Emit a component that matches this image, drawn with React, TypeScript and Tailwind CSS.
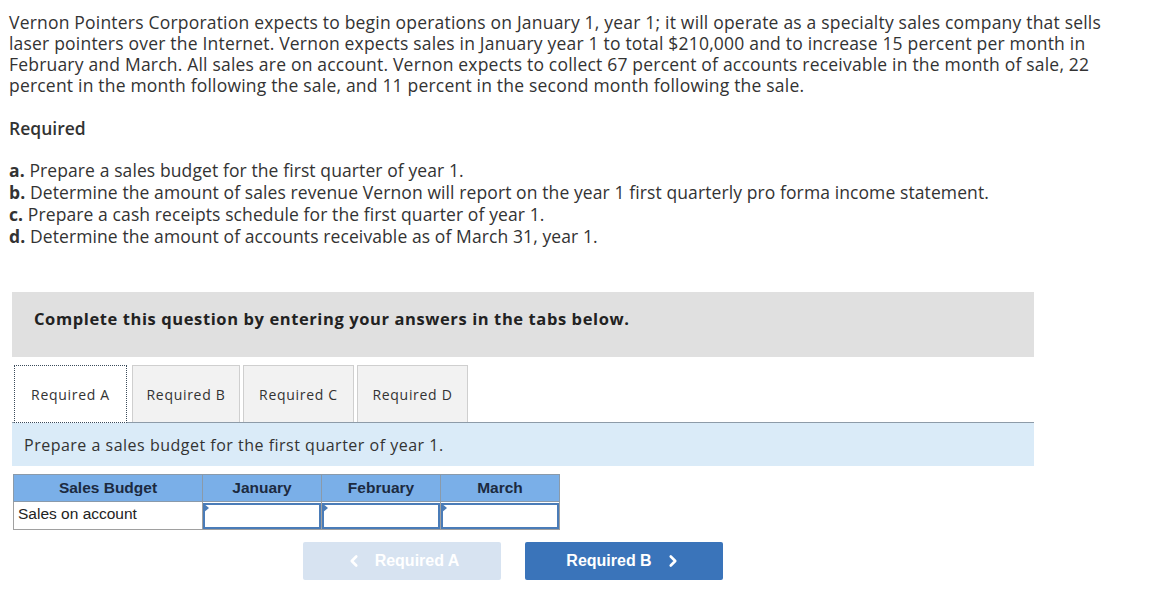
import { ChevronLeft, ChevronRight } from "lucide-react";

const tabs = ["Required A", "Required B", "Required C", "Required D"];
const months = ["January", "February", "March"];

function InputCell() {
  return (
    <td className="border border-[#a0a0a0] p-0">
      <div className="relative h-[26px] border-2 border-[#4a7cb8] bg-white">
        <span className="absolute left-[-2px] top-[-2px] h-0 w-0 border-y-[5px] border-l-[6px] border-y-transparent border-l-[#4a7cb8]" />
      </div>
    </td>
  );
}

export default function App() {
  return (
    <div className="min-h-[592px] w-[1162px] bg-white text-[#333]">
      {/* Problem text */}
      <div className="pl-[9px] pt-[12px] font-['Open_Sans',sans-serif] text-[17.5px] leading-[21px] tracking-[0.2px]">
        Vernon Pointers Corporation expects to begin operations on January 1, year 1; it will operate as a specialty sales company that sells
        <br />
        laser pointers over the Internet. Vernon expects sales in January year 1 to total $210,000 and to increase 15 percent per month in
        <br />
        February and March. All sales are on account. Vernon expects to collect 67 percent of accounts receivable in the month of sale, 22
        <br />
        percent in the month following the sale, and 11 percent in the second month following the sale.
      </div>

      <div className="pl-[9px] pt-[22px] font-['Open_Sans',sans-serif] text-[17.5px] font-semibold leading-[21px]">
        Required
      </div>

      <div className="pl-[9px] pt-[20px] font-['Open_Sans',sans-serif] text-[17.5px] leading-[22px] tracking-[0.1px]">
        <div>
          <b>a.</b> Prepare a sales budget for the first quarter of year 1.
        </div>
        <div>
          <b>b.</b> Determine the amount of sales revenue Vernon will report on the year 1 first quarterly pro forma income statement.
        </div>
        <div>
          <b>c.</b> Prepare a cash receipts schedule for the first quarter of year 1.
        </div>
        <div>
          <b>d.</b> Determine the amount of accounts receivable as of March 31, year 1.
        </div>
      </div>

      {/* Question panel */}
      <div className="ml-[12px] mt-[45px] w-[1022px]">
        <div className="flex h-[65px] items-center bg-[#e0e0e0] pb-[10px] pl-[22px] font-['Open_Sans',sans-serif] text-[16.5px] font-bold tracking-[0.6px] text-[#222]">
          Complete this question by entering your answers in the tabs below.
        </div>

        <div className="mt-[8px] flex border-b border-[#8d9ba8] pl-[2px] font-['Open_Sans',sans-serif] text-[14px] tracking-[0.7px] text-[#333]">
          <div className="mb-[-1px] flex h-[58px] w-[113px] items-center justify-center border border-dotted border-[#3a4a5a] bg-white">
            {tabs[0]}
          </div>
          <div className="ml-[5px] flex h-[57px] w-[108px] items-center justify-center border border-b-0 border-[#cfcfcf] bg-[#f2f2f2]">
            {tabs[1]}
          </div>
          <div className="ml-[3px] flex h-[57px] w-[111px] items-center justify-center border border-b-0 border-[#cfcfcf] bg-[#f2f2f2]">
            {tabs[2]}
          </div>
          <div className="ml-[3px] flex h-[57px] w-[111px] items-center justify-center border border-b-0 border-[#cfcfcf] bg-[#f2f2f2]">
            {tabs[3]}
          </div>
        </div>

        <div className="flex h-[43px] items-center bg-[#daebf8] pl-[12px] font-['Open_Sans',sans-serif] text-[16px] tracking-[0.5px] text-[#333]">
          Prepare a sales budget for the first quarter of year 1.
        </div>

        {/* Sales budget table */}
        <table className="ml-[1px] mt-[8px] border-collapse font-['Liberation_Sans',Arial,sans-serif] text-[15.5px]">
          <thead>
            <tr className="h-[27px] bg-[#7aafe8] text-[#1c2a40]">
              <th className="w-[189px] border border-[#8a9aaa] pb-[1px] font-bold">Sales Budget</th>
              {months.map((m) => (
                <th key={m} className="w-[119px] border border-[#8a9aaa] pb-[1px] font-bold">
                  {m}
                </th>
              ))}
            </tr>
          </thead>
          <tbody>
            <tr className="h-[28px]">
              <td className="border border-[#a0a0a0] pb-[3px] pl-[4px] text-[#222]">Sales on account</td>
              <InputCell />
              <InputCell />
              <InputCell />
            </tr>
          </tbody>
        </table>

        {/* Navigation */}
        <div className="mt-[12px] flex gap-[24px] pl-[291px] font-['Liberation_Sans',Arial,sans-serif] text-[16px] font-bold">
          <button className="flex h-[38px] w-[198px] items-center justify-center gap-[12px] rounded-[2px] bg-[#d7e3f1] text-white">
            <ChevronLeft size={18} strokeWidth={3.5} />
            Required A
          </button>
          <button className="flex h-[38px] w-[198px] items-center justify-center gap-[12px] rounded-[2px] bg-[#3a74ba] text-white">
            Required B
            <ChevronRight size={18} strokeWidth={3.5} />
          </button>
        </div>
      </div>
    </div>
  );
}
